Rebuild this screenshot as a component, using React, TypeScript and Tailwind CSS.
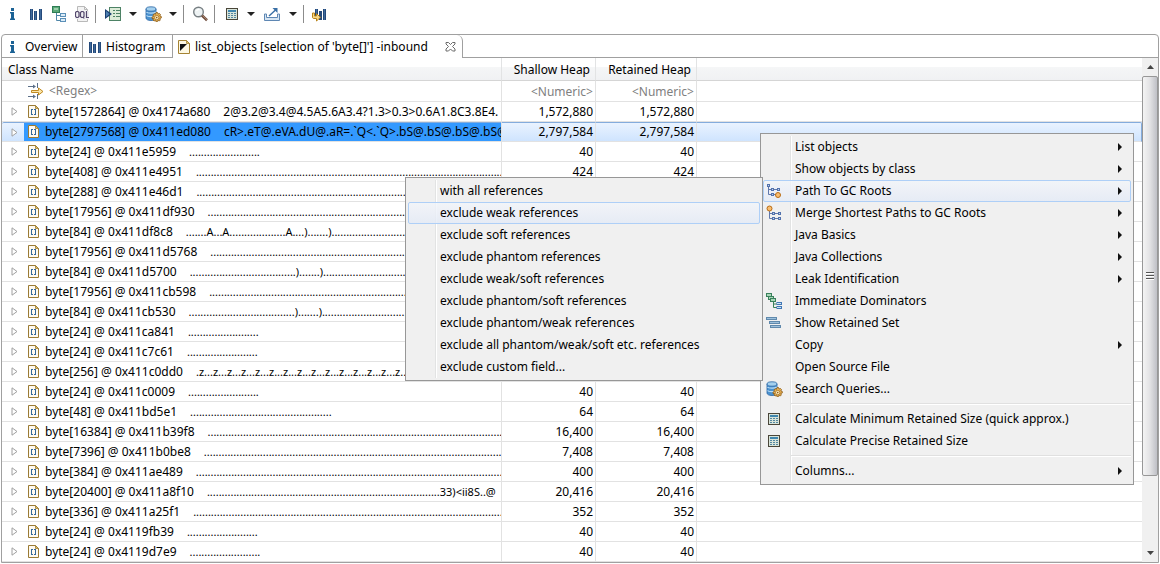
import type { ReactNode } from "react";

const dots = (n: number) => ".".repeat(n);

type HeapRow = { name: string; preview: string; shallow: string; retained: string; selected?: boolean; text?: boolean };

const rows: HeapRow[] = [
  { name: "byte[1572864] @ 0x4174a680", preview: "2@3.2@3.4@4.5A5.6A3.4?1.3>0.3>0.6A1.8C3.8E4.", shallow: "1,572,880", retained: "1,572,880", text: true },
  { name: "byte[2797568] @ 0x411ed080", preview: "cR>.eT@.eVA.dU@.aR=.`Q<.`Q>.bS@.bS@.bS@.bS@", shallow: "2,797,584", retained: "2,797,584", selected: true, text: true },
  { name: "byte[24] @ 0x411e5959", preview: dots(24), shallow: "40", retained: "40" },
  { name: "byte[408] @ 0x411e4951", preview: dots(110), shallow: "424", retained: "424" },
  { name: "byte[288] @ 0x411e46d1", preview: dots(110), shallow: "304", retained: "304" },
  { name: "byte[17956] @ 0x411df930", preview: dots(110), shallow: "17,976", retained: "17,976" },
  { name: "byte[84] @ 0x411df8c8", preview: `.......A...A${dots(19)}A....).......)${dots(46)}`, shallow: "104", retained: "104" },
  { name: "byte[17956] @ 0x411d5768", preview: dots(110), shallow: "17,976", retained: "17,976" },
  { name: "byte[84] @ 0x411d5700", preview: `${dots(36)}).......)${dots(39)}`, shallow: "104", retained: "104" },
  { name: "byte[17956] @ 0x411cb598", preview: dots(110), shallow: "17,976", retained: "17,976" },
  { name: "byte[84] @ 0x411cb530", preview: `${dots(36)}).......)${dots(39)}`, shallow: "104", retained: "104" },
  { name: "byte[24] @ 0x411ca841", preview: dots(24), shallow: "40", retained: "40" },
  { name: "byte[24] @ 0x411c7c61", preview: dots(24), shallow: "40", retained: "40" },
  { name: "byte[256] @ 0x411c0dd0", preview: `.${"z...".repeat(20)}`, shallow: "272", retained: "272" },
  { name: "byte[24] @ 0x411c0009", preview: dots(24), shallow: "40", retained: "40" },
  { name: "byte[48] @ 0x411bd5e1", preview: dots(48), shallow: "64", retained: "64" },
  { name: "byte[16384] @ 0x411b39f8", preview: dots(110), shallow: "16,400", retained: "16,400" },
  { name: "byte[7396] @ 0x411b0be8", preview: dots(110), shallow: "7,408", retained: "7,408" },
  { name: "byte[384] @ 0x411ae489", preview: dots(110), shallow: "400", retained: "400" },
  { name: "byte[20400] @ 0x411a8f10", preview: `${dots(79)}33)<ii8S..@`, shallow: "20,416", retained: "20,416" },
  { name: "byte[336] @ 0x411a25f1", preview: dots(110), shallow: "352", retained: "352" },
  { name: "byte[24] @ 0x4119fb39", preview: dots(24), shallow: "40", retained: "40" },
  { name: "byte[24] @ 0x4119d7e9", preview: dots(24), shallow: "40", retained: "40" },
];

function Svg({ children, w = 16, h = 16 }: { children: ReactNode; w?: number; h?: number }) {
  return (
    <svg width={w} height={h} viewBox={`0 0 ${w} ${h}`} className="block shrink-0" aria-hidden="true">
      {children}
    </svg>
  );
}

const InfoIcon = () => (
  <Svg>
    <path d="M7 2h3v3H7zM6 6h4v6.500h1V14H6v-1.500h1v-5H6z" fill="#1b6295" />
  </Svg>
);

const HistogramIcon = () => (
  <Svg>
    <path d="M2 3h3v11H2zM6 5h3v9H6zM11 3h3v11h-3z" fill="#24497a" />
    <path d="M3 3h1v11H3zM7 5h1v9H7zM12 3h1v11h-1z" fill="#3f6a9c" />
  </Svg>
);

const TreeIcon = () => (
  <Svg>
    <rect x="0.5" y="0.500" width="7" height="6" fill="#5aa878" stroke="#2f7d55" />
    <rect x="2" y="2" width="4" height="2" fill="#9ed0ad" />
    <path d="M4.500 7v7.500H9M4.500 9.500H9" fill="none" stroke="#4f86a8" />
    <rect x="8.500" y="7.500" width="5" height="3" fill="#dcecf8" stroke="#5b90b8" />
    <rect x="8.500" y="12.500" width="5" height="3" fill="#dcecf8" stroke="#5b90b8" />
  </Svg>
);

const OqlIcon = () => (
  <Svg>
    <path d="M2.500 0.500h7l3 3v12h-10z" fill="#f3f3f3" stroke="#b9b9b9" />
    <path d="M9.500 0.500v3h3" fill="none" stroke="#b9b9b9" />
    <rect x="0" y="5" width="14" height="8" fill="#efeff2" />
    <path
      d="M1.500 5.500h1.500l1 1v4l-1 1H1.500l-1-1V6.500zM6.500 5.500H8l1 1v4l-1 1H6.500l-1-1V6.500zM11.500 5v6.500h2.500M8 11l1.200 1.500"
      fill="none"
      stroke="#55496e"
      strokeWidth="1.200"
    />
  </Svg>
);

const RunReportIcon = () => (
  <Svg w={17}>
    <rect x="5.500" y="1.500" width="11" height="13" fill="#dcebd8" stroke="#4d8265" />
    <path d="M9 4.500h2M12 4.500h4M9 7.500h2M12 7.500h4M9 10.500h2M12 10.500h4" stroke="#4d8265" />
    <path d="M1 3l7 5-7 5z" fill="#1b3f73" />
    <path d="M2 5l3.500 3L2 11z" fill="#4d80b0" />
  </Svg>
);

const Gear = () => (
  <>
    <path
      d="M11 6.500h1.500l.5 1.500 1.500-.5 1 1-.7 1.500 1.500.5v1.500l-1.500.5.5 1.500-1 1-1.500-.7-.5 1.500H11l-.5-1.500-1.500.7-1-1 .5-1.500L7 12.500V11l1.500-.5L8 9l1-1.200 1.500.4z"
      fill="#e8b254"
      stroke="#8b5b17"
      strokeWidth="0.800"
    />
    <circle cx="11.700" cy="11.600" r="2.200" fill="#fbe9bd" stroke="#9c6a20" strokeWidth="0.700" />
    <circle cx="11.700" cy="11.600" r="0.800" fill="#8b5b17" />
  </>
);

const DatabaseIcon = () => (
  <Svg w={17}>
    <path d="M1 3v9c0 1.500 2 2.500 5 2.500s5-1 5-2.500V3z" fill="#4c92cf" stroke="#2966a4" strokeWidth="0.800" />
    <path d="M1.500 6c1 1.500 8 1.500 9.300 0M1.500 9.500c1 1.500 8 1.500 9.300 0" fill="none" stroke="#b8dcf5" strokeWidth="1.300" />
    <ellipse cx="6" cy="3" rx="5" ry="2.200" fill="#a4d0ee" stroke="#2966a4" strokeWidth="0.800" />
    <Gear />
  </Svg>
);

const SearchIcon = () => (
  <Svg>
    <circle cx="6.500" cy="6" r="4.800" fill="#eef3f4" stroke="#777f83" strokeWidth="1.400" />
    <path d="M4.500 5a3 3 0 013-1.500" fill="none" stroke="#fff" strokeWidth="1.200" />
    <path d="M10 9.500l5 4.800" stroke="#6d4a3a" strokeWidth="2.600" />
    <path d="M10.500 9.500l4.500 4.300" stroke="#b99a84" strokeWidth="0.800" />
  </Svg>
);

const CalculatorIcon = () => (
  <Svg>
    <rect x="2" y="2" width="12" height="12" fill="#4a4639" />
    <rect x="3" y="3" width="10" height="10" fill="#d8e4da" />
    <rect x="4" y="4" width="8" height="2" fill="#3f86ae" />
    <path d="M4 7h2v1H4zM7 7h2v1H7zM10 7h2v1h-2zM4 9h2v1H4zM7 9h2v1H7zM10 9h2v1h-2zM4 11h2v1H4zM7 11h2v1H7zM10 11h2v1h-2z" fill="#5487a0" />
  </Svg>
);

const ExportIcon = () => (
  <Svg w={18}>
    <path d="M1.500 8v6.500h15V8h-2v3.500H3.500V8z" fill="#d6e5f3" stroke="#5e87b3" />
    <path d="M6 10l6.500-6" stroke="#396fa5" strokeWidth="1.400" />
    <path d="M9.500 2h5v5z" fill="#396fa5" />
  </Svg>
);

const CompareIcon = () => (
  <Svg>
    <path d="M4 3h3v9H4zM8 5h3v9H8zM12 3h3v11h-3z" fill="#24497a" />
    <path d="M5 3h1v9H5zM13 3h1v11h-1z" fill="#3f6a9c" />
    <path d="M1.500 7v4c0 1 .5 1.500 1.500 1.500h2.500v2.500l4-3.700-4-3.600v2.300H3.500V7z" fill="#f6d88b" stroke="#b88318" />
  </Svg>
);

const ListPageIcon = () => (
  <Svg>
    <path d="M2.500 1.500h8l3 3v10h-11z" fill="#fdf8e4" stroke="#a58333" />
    <path d="M10.500 1.500v3h3z" fill="#d9bd6c" stroke="#a58333" strokeWidth="0.800" />
    <path d="M4 5h7l-7 7z" fill="#111" />
  </Svg>
);

const ArrayIcon = () => (
  <Svg>
    <path d="M4.500 1.500h7l3 3v9h-10z" fill="#fffaf0" stroke="#9a7b35" />
    <path d="M11.500 1.500v3h3z" fill="#e0c066" stroke="#9a7b35" strokeWidth="0.800" />
    <path d="M7 5h2v1H8v4h1v1H7zM10 5h2v6h-2v-1h1V6h-1z" fill="#34699b" />
  </Svg>
);

const FilterIcon = () => (
  <Svg>
    <path d="M0 3.500h7M0 13.500h7" stroke="#5c7089" />
    <path d="M5 1.500l3 2-3 2zM5 11.500l3 2-3 2z" fill="#5c7089" />
    <path d="M9.500 0v5M9.500 11v5" stroke="#5c7089" />
    <path d="M3.500 7.500h7V5l4.500 3.500-4.500 3.500v-2.500h-7z" fill="#fbe5a8" stroke="#c08a22" />
  </Svg>
);

const PathIcon = () => (
  <Svg>
    <path d="M2.500 3v8.500H5M2.500 6.500H5M8 6.500h3M8 11.500h2" fill="none" stroke="#6078ac" />
    <path d="M1 1h3v3H1zM5 5h3v3H5zM11 5h3v3h-3zM5 10h3v3H5z" fill="#5272ad" />
    <path d="M2 2h1v1H2zM6 6h1v1H6zM12 6h1v1h-1zM6 11h1v1H6z" fill="#c5d3ea" />
    <circle cx="12" cy="12" r="2.500" fill="#f8bd70" stroke="#b96b12" />
  </Svg>
);

const MergeIcon = () => (
  <Svg>
    <path d="M3.500 6v7.500H6M3.500 8.500H6M9 8.500h3M9 13.500h3" fill="none" stroke="#6078ac" />
    <path d="M6 7h3v3H6zM12 7h3v3h-3zM6 12h3v3H6zM12 12h3v3h-3z" fill="#5272ad" />
    <path d="M7 8h1v1H7zM13 8h1v1h-1zM7 13h1v1H7zM13 13h1v1h-1z" fill="#c5d3ea" />
    <circle cx="3.500" cy="3.500" r="2.500" fill="#f8bd70" stroke="#b96b12" />
  </Svg>
);

const DominatorIcon = () => (
  <Svg>
    <rect x="0.500" y="0.500" width="5" height="3" fill="#a9d6b8" stroke="#39805b" />
    <rect x="2.500" y="3.500" width="5" height="3" fill="#a9d6b8" stroke="#39805b" />
    <rect x="4.500" y="5.500" width="5" height="3" fill="#a9d6b8" stroke="#39805b" />
    <path d="M7.500 9v5.500H11M7.500 11h3.500" fill="none" stroke="#39805b" />
    <rect x="11" y="9.500" width="4.500" height="2" fill="#c9e2f5" stroke="#4177b5" />
    <rect x="11" y="13.500" width="4.500" height="2" fill="#c9e2f5" stroke="#4177b5" />
  </Svg>
);

const RetainedIcon = () => (
  <Svg>
    <rect x="0.500" y="2.500" width="10" height="2" fill="#9cc0dc" stroke="#6089ac" />
    <rect x="3.500" y="6.500" width="10" height="2" fill="#9cc0dc" stroke="#6089ac" />
    <rect x="4.500" y="10.500" width="10" height="2" fill="#9cc0dc" stroke="#6089ac" />
  </Svg>
);

const CloseIcon = () => (
  <Svg w={11} h={11}>
    <path d="M1 1.500h2.500l2 2 2-2H10v1.500L7.500 5.500 10 8v2H7.500l-2-2-2 2H1V8l2.500-2.500L1 3z" fill="#fff" stroke="#6b6b6b" />
  </Svg>
);

const DownArrow = () => (
  <Svg w={8} h={4}>
    <path d="M0 0h8L4 4z" fill="#222" />
  </Svg>
);

const RightArrow = () => (
  <Svg w={4} h={8}>
    <path d="M0 0l4 4-4 4z" fill="#111" />
  </Svg>
);

function ToolButton({ label, className, children }: { label: string; className: string; children: ReactNode }) {
  return (
    <button type="button" aria-label={label} className={`flex h-6 items-center justify-center ${className}`}>
      {children}
    </button>
  );
}

function MenuArrow({ label }: { label: string }) {
  return (
    <ToolButton label={label} className="w-3">
      <DownArrow />
    </ToolButton>
  );
}

const Separator = ({ className }: { className: string }) => <span className={`h-[18px] w-px shrink-0 bg-[#8c8c8c] ${className}`} />;

function Toolbar() {
  return (
    <div role="toolbar" aria-label="Heap dump tools" className="flex h-7 items-center">
      <ToolButton label="Overview" className="w-6"><InfoIcon /></ToolButton>
      <ToolButton label="Histogram" className="w-6"><HistogramIcon /></ToolButton>
      <ToolButton label="Dominator tree" className="w-6"><TreeIcon /></ToolButton>
      <ToolButton label="OQL" className="w-[22px]"><OqlIcon /></ToolButton>
      <Separator className="mx-px" />
      <ToolButton label="Run report" className="w-[30px]"><RunReportIcon /></ToolButton>
      <MenuArrow label="Report list" />
      <ToolButton label="Query browser" className="w-7"><DatabaseIcon /></ToolButton>
      <MenuArrow label="Query list" />
      <Separator className="ml-1" />
      <ToolButton label="Find object" className="w-[30px] pl-px"><SearchIcon /></ToolButton>
      <Separator className="" />
      <ToolButton label="Calculate retained size" className="w-[30px] pl-1"><CalculatorIcon /></ToolButton>
      <MenuArrow label="Calculation list" />
      <ToolButton label="Export" className="w-[30px]"><ExportIcon /></ToolButton>
      <MenuArrow label="Export list" />
      <Separator className="ml-1" />
      <ToolButton label="Compare" className="w-[30px]"><CompareIcon /></ToolButton>
    </div>
  );
}

function Tabs() {
  return (
    <div role="tablist" className="flex h-[23px] whitespace-nowrap">
      <button type="button" role="tab" className="flex w-[81px] items-center gap-[5px] border-r border-b border-[#a0a0a0] pt-px pl-[2px]">
        <InfoIcon />
        Overview
      </button>
      <button type="button" role="tab" className="flex w-[89px] items-center gap-[3px] border-b border-[#a0a0a0] pt-px pl-1">
        <HistogramIcon />
        Histogram
      </button>
      <div className="flex w-[291px] items-center rounded-tr-md border-x border-[#a0a0a0] pl-[3px]">
        <button type="button" role="tab" aria-selected="true" className="flex items-center gap-[3px]">
          <ListPageIcon />
          list_objects [selection of 'byte[]'] -inbound
        </button>
        <button type="button" aria-label="Close tab" className="mr-[6px] ml-auto">
          <CloseIcon />
        </button>
      </div>
      <div className="flex-1 border-b border-[#a0a0a0]" />
    </div>
  );
}

const headCell = "h-[23px] border-r border-b border-r-[#e2e3e4] border-b-[#d5d5d5] p-0 pt-[2px] font-normal bg-[linear-gradient(#fff_40%,#f5f6f7_40%,#f0f1f3)]";
const filterCell = "h-[21px] border-r border-b border-[#e2e2e2] p-0 pt-px pr-[2px] text-right text-[#808080]";

function HeapTable() {
  return (
    <table className="w-full table-fixed border-separate border-spacing-0 whitespace-pre">
      <colgroup>
        <col className="w-[500px]" />
        <col className="w-[94px]" />
        <col className="w-[101px]" />
        <col />
      </colgroup>
      <thead>
        <tr>
          <th className={`${headCell} pl-[6px] text-left`}>Class Name</th>
          <th className={`${headCell} pr-[5px] text-right`}>Shallow Heap</th>
          <th className={`${headCell} pr-[5px] text-right`}>Retained Heap</th>
          <th aria-label="Spare" className="h-[23px] border-b border-b-[#d5d5d5] bg-[linear-gradient(#fff_40%,#f5f6f7_40%,#f0f1f3)] p-0" />
        </tr>
      </thead>
      <tbody>
        <tr>
          <td className="h-[21px] border-r border-b border-[#e2e2e2] p-0">
            <div className="flex items-center gap-[5px] pl-[26px] text-[#808080]">
              <FilterIcon />
              &lt;Regex&gt;
            </div>
          </td>
          <td className={filterCell}>&lt;Numeric&gt;</td>
          <td className={filterCell}>&lt;Numeric&gt;</td>
          <td className="border-b border-[#e2e2e2] p-0" />
        </tr>
        {rows.map((row) => {
          const tint = row.selected
            ? "border-t border-t-[#84acdd] bg-linear-to-b from-[#eaf3ff] to-[#cfe4fe]"
            : "";
          return (
            <tr key={row.name} aria-selected={row.selected}>
              <td className={`h-5 overflow-hidden border-r border-b border-[#e2e2e2] p-0 ${tint} ${row.selected ? "rounded-tl-xs" : ""}`}>
                <div className="flex h-[18px] items-center">
                  <button type="button" aria-label={`Expand ${row.name}`} className="flex w-[22px] shrink-0 justify-center pl-[3px]">
                    <Svg w={7} h={9}>
                      <path d="M1 0.800l5 3.700-5 3.700z" fill="#fff" stroke="#a0a0a0" />
                    </Svg>
                  </button>
                  <div className={`flex h-full min-w-0 flex-1 items-center gap-[5px] overflow-hidden ${row.selected ? "bg-[#3399ff]" : ""}`}>
                    <ArrayIcon />
                    <div className="flex items-baseline gap-[13px]">
                      <span>{row.name}</span>
                      <span className={row.text ? "text-[12px] leading-4" : "text-[11px] leading-4"}>{row.preview}</span>
                    </div>
                  </div>
                </div>
              </td>
              <td className={`border-r border-b border-[#e2e2e2] p-0 pr-[2px] text-right ${tint}`}>{row.shallow}</td>
              <td className={`border-r border-b border-[#e2e2e2] p-0 pr-[2px] text-right ${tint}`}>{row.retained}</td>
              <td className={`border-b border-[#e2e2e2] p-0 ${tint} ${row.selected ? "rounded-tr-xs border-r border-r-[#84acdd]" : ""}`} />
            </tr>
          );
        })}
      </tbody>
    </table>
  );
}

function Scrollbar() {
  return (
    <div aria-hidden="true" className="flex w-4 shrink-0 flex-col bg-[#f0f0f0]">
      <div className="flex h-[18px] items-center justify-center">
        <Svg w={7} h={4}>
          <path d="M0 4L3.500 0 7 4z" fill="#444" />
        </Svg>
      </div>
      <div className="flex flex-[401] flex-col items-center justify-center gap-px rounded-xs border border-[#979797] bg-linear-to-r from-[#f4f4f4] via-[#e2e2e4] to-[#bfc0c6]">
        <span className="h-[2px] w-2 border-b border-white bg-[#555]" />
        <span className="h-[2px] w-2 border-b border-white bg-[#555]" />
        <span className="h-[2px] w-2 border-b border-white bg-[#555]" />
      </div>
      <div className="flex flex-[68]" />
      <div className="flex h-[18px] items-center justify-center">
        <Svg w={7} h={4}>
          <path d="M0 0h7L3.500 4z" fill="#444" />
        </Svg>
      </div>
    </div>
  );
}

type Item = { label: string; icon?: ReactNode; arrow?: boolean; active?: boolean; divider?: boolean };

const contextItems: Item[] = [
  { label: "List objects", arrow: true },
  { label: "Show objects by class", arrow: true },
  { label: "Path To GC Roots", arrow: true, active: true, icon: <PathIcon /> },
  { label: "Merge Shortest Paths to GC Roots", arrow: true, icon: <MergeIcon /> },
  { label: "Java Basics", arrow: true },
  { label: "Java Collections", arrow: true },
  { label: "Leak Identification", arrow: true },
  { label: "Immediate Dominators", icon: <DominatorIcon /> },
  { label: "Show Retained Set", icon: <RetainedIcon /> },
  { label: "Copy", arrow: true },
  { label: "Open Source File" },
  { label: "Search Queries...", icon: <DatabaseIcon /> },
  { label: "Calculate Minimum Retained Size (quick approx.)", icon: <CalculatorIcon />, divider: true },
  { label: "Calculate Precise Retained Size", icon: <CalculatorIcon /> },
  { label: "Columns...", arrow: true, divider: true },
];

const pathItems: Item[] = [
  { label: "with all references" },
  { label: "exclude weak references", active: true },
  { label: "exclude soft references" },
  { label: "exclude phantom references" },
  { label: "exclude weak/soft references" },
  { label: "exclude phantom/soft references" },
  { label: "exclude phantom/weak references" },
  { label: "exclude all phantom/weak/soft etc. references" },
  { label: "exclude custom field..." },
];

function Menu({ label, items, className }: { label: string; items: Item[]; className: string }) {
  return (
    <div role="menu" aria-label={label} className={`absolute border border-[#979797] bg-[#f0f0f0] p-[2px] whitespace-nowrap ${className}`}>
      <div className="bg-[linear-gradient(90deg,transparent_27px,#e2e3e3_27px,#e2e3e3_28px,#fff_28px,#fff_29px,transparent_29px)]">
        {items.map((item) => (
          <div key={item.label}>
            {item.divider && (
              <div role="separator" className="flex h-2 items-center pl-7">
                <div className="h-[2px] flex-1 border-t border-[#e0e0e0] bg-white" />
              </div>
            )}
            <button
              type="button"
              role="menuitem"
              className={`flex h-[22px] w-full items-center rounded-xs border pr-2 pl-px text-left ${
                item.active ? "border-[#aecff7] bg-linear-to-b from-[#f2f5fa]/80 to-[#e4eaf6]/80" : "border-transparent"
              }`}
            >
              <span className="flex w-[30px] shrink-0 pl-px">{item.icon}</span>
              <span className="flex-1">{item.label}</span>
              {item.arrow && <RightArrow />}
            </button>
          </div>
        ))}
      </div>
    </div>
  );
}

export default function App() {
  return (
    <div className="relative w-full overflow-hidden bg-white pb-px font-['Noto_Sans','Noto_Sans_CJK_SC',sans-serif] text-[12px] leading-4 text-black">
      <Toolbar />
      <main className="mx-px mt-[6px] rounded-t-sm border border-[#a0a0a0]">
        <Tabs />
        <div className="flex">
          <div className="min-w-0 flex-1">
            <HeapTable />
          </div>
          <Scrollbar />
        </div>
      </main>
      <Menu label="Object actions" items={contextItems} className="top-[133px] left-[760px] w-[374px]" />
      <Menu label="Path To GC Roots" items={pathItems} className="top-[177px] left-[405px] w-[358px]" />
    </div>
  );
}
